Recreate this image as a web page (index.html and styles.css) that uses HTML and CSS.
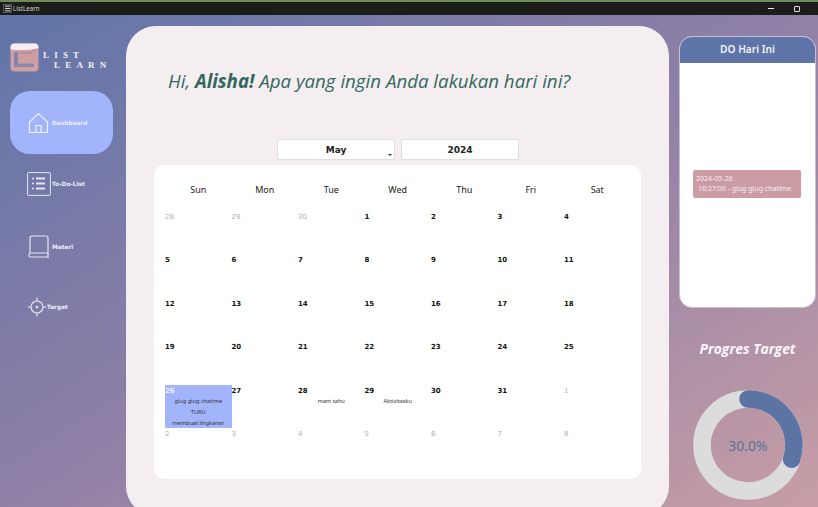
FILE: index.html
```html
<!DOCTYPE html>
<html lang="en">

<head>
    <meta charset="UTF-8">
    <meta name="viewport" content="width=device-width, initial-scale=1.0">
    <title>ListLearn</title>
    <link rel="stylesheet" href="styles.css">
</head>

<body>
    <div class="window">
        <header class="titlebar">
            <div class="titlebar-name">
                <svg class="app-icon" viewBox="0 0 9 9" width="9" height="9">
                    <rect x="0.4" y="0.4" width="8.2" height="8.2" fill="none" stroke="#777" stroke-width="0.7" />
                    <path d="M2 2.2H7.5M2 4.5H7.5M2 6.8H7.5" stroke="#eee" stroke-width="0.9" />
                </svg>
                <span>ListLearn</span>
            </div>
            <div class="window-buttons">
                <span class="btn-min"></span>
                <span class="btn-max"></span>
            </div>
        </header>

        <div class="content">
            <aside class="sidebar">
                <div class="logo">
                    <svg viewBox="0 0 30 30" width="30" height="30">
                        <rect x="0.5" y="0.5" width="28" height="28" rx="4" fill="#cf9ea2" />
                        <path d="M0.5 6.5V4.5a4 4 0 0 1 4-4h20a4 4 0 0 1 4 4V5C22 7.5 8 7.5 0.5 6.5z" fill="#f6eef0" />
                        <path d="M4 9V24H24V20.5H8V9z" fill="#8f86ac" />
                        <path d="M5 12H7M5 15H7M5 18H7M5 21H7" stroke="#5f74a9" stroke-width="1" />
                        <path d="M9 10H20L26 6" fill="none" stroke="#8a7d9c" stroke-width="0.8" />
                    </svg>
                    <div class="logo-text">
                        <span>LIST</span>
                        <span class="logo-second">LEARN</span>
                    </div>
                </div>

                <nav class="menu">
                    <a class="menu-item active" href="#">
                        <svg viewBox="0 0 22 22" width="22" height="22" fill="none" stroke="#f0effa" stroke-width="1.2">
                            <path d="M1.5 10L10.5 1.5L19.5 10V20.5H1.5z" />
                            <path d="M8 20.5V13.5H13V20.5" />
                        </svg>
                        <span>Dashboard</span>
                    </a>
                    <a class="menu-item todo" href="#">
                        <svg viewBox="0 0 24 24" width="24" height="24" fill="none" stroke="#e8e6f2">
                            <rect x="0.6" y="0.6" width="22.8" height="22.8" rx="1" stroke-width="1" />
                            <path d="M9 6.5H18M9 11.5H18M9 16.5H18" stroke-width="2" />
                            <path d="M5 6.5H7M5 11.5H7M5 16.5H7" stroke-width="1.3" />
                        </svg>
                        <span>To-Do-List</span>
                    </a>
                    <a class="menu-item materi" href="#">
                        <svg viewBox="0 0 22 24" width="22" height="24" fill="none" stroke="#e8e6f2" stroke-width="1.2">
                            <path d="M2 18V3a2 2 0 0 1 2-2H18a2 2 0 0 1 2 2V18z" />
                            <path d="M2 18C0.5 19.5 0.5 22 2.5 22H20" />
                            <path d="M20 18V23" />
                        </svg>
                        <span>Materi</span>
                    </a>
                    <a class="menu-item target" href="#">
                        <svg viewBox="0 0 20 20" width="20" height="20" fill="none" stroke="#e8e6f2" stroke-width="1.1">
                            <circle cx="10" cy="10" r="6" />
                            <circle cx="10" cy="10" r="0.8" fill="#e8e6f2" />
                            <path d="M10 0.5V4M10 16V19.5M0.5 10H4M16 10H19.5" />
                        </svg>
                        <span>Target</span>
                    </a>
                </nav>
            </aside>

            <main class="main-card">
                <h1 class="greeting">Hi, <b>Alisha!</b> Apa yang ingin Anda lakukan hari ini?</h1>

                <div class="pickers">
                    <div class="picker month">May<span class="caret"></span></div>
                    <div class="picker year">2024</div>
                </div>

                <section class="calendar">
                    <div class="week">
                        <span>Sun</span><span>Mon</span><span>Tue</span><span>Wed</span><span>Thu</span><span>Fri</span><span>Sat</span>
                    </div>
                    <div class="days">
                        <div class="day muted">28</div>
                        <div class="day muted">29</div>
                        <div class="day muted">30</div>
                        <div class="day">1</div>
                        <div class="day">2</div>
                        <div class="day">3</div>
                        <div class="day">4</div>

                        <div class="day">5</div>
                        <div class="day">6</div>
                        <div class="day">7</div>
                        <div class="day">8</div>
                        <div class="day">9</div>
                        <div class="day">10</div>
                        <div class="day">11</div>

                        <div class="day">12</div>
                        <div class="day">13</div>
                        <div class="day">14</div>
                        <div class="day">15</div>
                        <div class="day">16</div>
                        <div class="day">17</div>
                        <div class="day">18</div>

                        <div class="day">19</div>
                        <div class="day">20</div>
                        <div class="day">21</div>
                        <div class="day">22</div>
                        <div class="day">23</div>
                        <div class="day">24</div>
                        <div class="day">25</div>

                        <div class="day today">26
                            <p>glug glug chatime</p>
                            <p>TURU</p>
                            <p>membuat lingkaran</p>
                        </div>
                        <div class="day">27</div>
                        <div class="day">28
                            <p>mam tahu</p>
                        </div>
                        <div class="day">29
                            <p>Aktivitasku</p>
                        </div>
                        <div class="day">30</div>
                        <div class="day">31</div>
                        <div class="day muted">1</div>

                        <div class="day muted">2</div>
                        <div class="day muted">3</div>
                        <div class="day muted">4</div>
                        <div class="day muted">5</div>
                        <div class="day muted">6</div>
                        <div class="day muted">7</div>
                        <div class="day muted">8</div>
                    </div>
                </section>
            </main>

            <aside class="right-col">
                <section class="do-card">
                    <h2>DO Hari Ini</h2>
                    <div class="do-body">
                        <div class="do-item">
                            <div>2024-05-26</div>
                            <div class="do-time">16:27:00 - glug glug chatime</div>
                        </div>
                    </div>
                </section>

                <h3 class="progress-title">Progres Target</h3>

                <div class="progress">
                    <svg viewBox="0 0 110 110" width="110" height="110">
                        <circle cx="55" cy="55" r="46" fill="none" stroke="#dcdcdc" stroke-width="17.5" />
                        <path d="M55 9A46 46 0 0 1 98.7 69.2" fill="none" stroke="#5b74a3" stroke-width="17.5" stroke-linecap="round" />
                    </svg>
                    <span class="progress-value">30.0%</span>
                </div>
            </aside>
        </div>
    </div>
</body>

</html>
```

FILE: styles.css
```css
* {
    box-sizing: border-box;
}

html,
body {
    margin: 0;
    padding: 0;
}

.window {
    width: 818px;
    height: 507px;
    overflow: hidden;
    display: flex;
    flex-direction: column;
    background: linear-gradient(to bottom right, #5f74a9 0%, #8f80a6 50%, #c89ea6 100%);
    font-family: "DejaVu Sans", sans-serif;
}

/* Title bar */
.titlebar {
    height: 15px;
    flex-shrink: 0;
    display: flex;
    justify-content: space-between;
    align-items: center;
    background-color: #1b1d1b;
    border-top: 2px solid #6f8a5c;
    color: #d4d4d4;
    font-family: "Noto Sans", sans-serif;
    font-size: 6.2px;
}

.titlebar-name {
    display: flex;
    align-items: center;
    gap: 1px;
    padding-left: 3px;
}

.window-buttons {
    display: flex;
    align-items: center;
    gap: 20px;
    padding-right: 18px;
}

.btn-min {
    width: 6px;
    height: 1px;
    background-color: #eee;
}

.btn-max {
    width: 6px;
    height: 6px;
    border: 1px solid #ddd;
    border-radius: 1px;
}

.content {
    flex: 1;
    min-height: 0;
    display: flex;
}

/* Sidebar */
.sidebar {
    width: 126px;
    flex-shrink: 0;
    padding: 28px 13px 0 10px;
}

.logo {
    display: flex;
    gap: 3px;
    height: 30px;
}

.logo-text {
    display: flex;
    flex-direction: column;
    padding-top: 7px;
    color: #f3eff5;
    font-family: "Liberation Serif", serif;
    font-weight: bold;
    font-size: 9px;
    line-height: 10px;
    letter-spacing: 5.2px;
}

.logo-second {
    padding-left: 11px;
}

.menu {
    margin-top: 18px;
    display: flex;
    flex-direction: column;
}

.menu-item {
    display: flex;
    align-items: center;
    color: #f0effa;
    text-decoration: none;
    font-size: 5.8px;
    font-weight: bold;
    white-space: nowrap;
}

.menu-item.active {
    height: 63px;
    gap: 2px;
    padding-left: 18px;
    background-color: #a2b4fc;
    border-radius: 20px;
}

.menu-item.todo {
    margin-top: 18px;
    height: 24px;
    gap: 1px;
    padding-left: 17px;
}

.menu-item.materi {
    margin-top: 39px;
    height: 24px;
    gap: 2px;
    padding-left: 18px;
}

.menu-item.target {
    margin-top: 38px;
    height: 20px;
    gap: 0;
    padding-left: 17px;
}

/* Main card */
.main-card {
    width: 543px;
    flex-shrink: 0;
    margin-top: 11px;
    height: 490px;
    padding: 0 28px;
    background-color: #f4eef1;
    border-radius: 30px;
}

.greeting {
    margin: 42px 0 0 14px;
    height: 26px;
    font-family: "Open Sans", sans-serif;
    font-size: 18.7px;
    line-height: 26px;
    font-weight: normal;
    font-style: italic;
    color: #33685f;
    white-space: nowrap;
}

.pickers {
    margin: 45px 0 0 123px;
    display: flex;
    gap: 6px;
}

.picker {
    height: 21px;
    position: relative;
    background-color: #fff;
    border: 1px solid #dfdfe6;
    text-align: center;
    font-size: 9px;
    font-weight: bold;
    line-height: 20px;
    color: #222;
}

.month {
    width: 118px;
}

.year {
    width: 118px;
}

.caret {
    position: absolute;
    right: 2px;
    bottom: 3px;
    border-left: 2px solid transparent;
    border-right: 2px solid transparent;
    border-top: 2px solid #333;
}

.calendar {
    margin-top: 5px;
    width: 487px;
    height: 314px;
    padding: 0 11px;
    background-color: #fff;
    border-radius: 10px;
}

.week {
    height: 46px;
    display: grid;
    grid-template-columns: repeat(7, 66.5px);
    padding-top: 19px;
    font-family: "Noto Sans", sans-serif;
    font-size: 9px;
    line-height: 12px;
    color: #222;
    text-align: center;
}

.days {
    display: grid;
    grid-template-columns: repeat(7, 66.5px);
    grid-auto-rows: 43.4px;
}

.day {
    padding-top: 1px;
    font-size: 7px;
    font-weight: bold;
    line-height: 10px;
    color: #111;
}

.day p {
    margin: 0;
    font-family: "Noto Sans", sans-serif;
    font-size: 5.6px;
    font-weight: normal;
    line-height: 11.2px;
    text-align: center;
    color: #333;
}

.day.muted {
    font-weight: normal;
    color: #b0b0b0;
}

.day.today {
    background-color: #a2b4fc;
    color: #f0f0ff;
}

/* Right column */
.right-col {
    width: 149px;
    flex-shrink: 0;
    padding: 21px 15px 0 10px;
    display: flex;
    flex-direction: column;
}

.do-card {
    width: 137px;
    height: 272px;
    background-color: #fff;
    border-radius: 13px;
    border: 1px solid #c9bfd4;
    overflow: hidden;
}

.do-card h2 {
    margin: 0;
    height: 26px;
    background-color: #5f74a9;
    color: #f1f1f8;
    font-family: "Noto Sans", sans-serif;
    font-size: 10.2px;
    font-weight: 600;
    line-height: 25px;
    text-align: center;
}

.do-body {
    padding: 107px 14px 0 13px;
}

.do-item {
    height: 28px;
    padding: 4px 3px;
    background-color: #cb9ca4;
    border-radius: 2px;
    color: #f6eef0;
    font-family: "Noto Sans", sans-serif;
    font-size: 7px;
    line-height: 9.5px;
    white-space: nowrap;
}

.do-time {
    padding-left: 2px;
}

.progress-title {
    margin: 32px 0 0;
    color: #fbf6fb;
    font-family: "Open Sans", sans-serif;
    font-size: 13.9px;
    line-height: 17px;
    font-weight: bold;
    font-style: italic;
    text-align: center;
    width: 137px;
}

.progress {
    margin: 33px 0 0 14px;
    width: 110px;
    height: 110px;
    position: relative;
}

.progress-value {
    position: absolute;
    inset: 0;
    display: flex;
    align-items: center;
    justify-content: center;
    color: #5b7298;
    font-family: "Noto Sans", sans-serif;
    font-size: 14px;
}
```
